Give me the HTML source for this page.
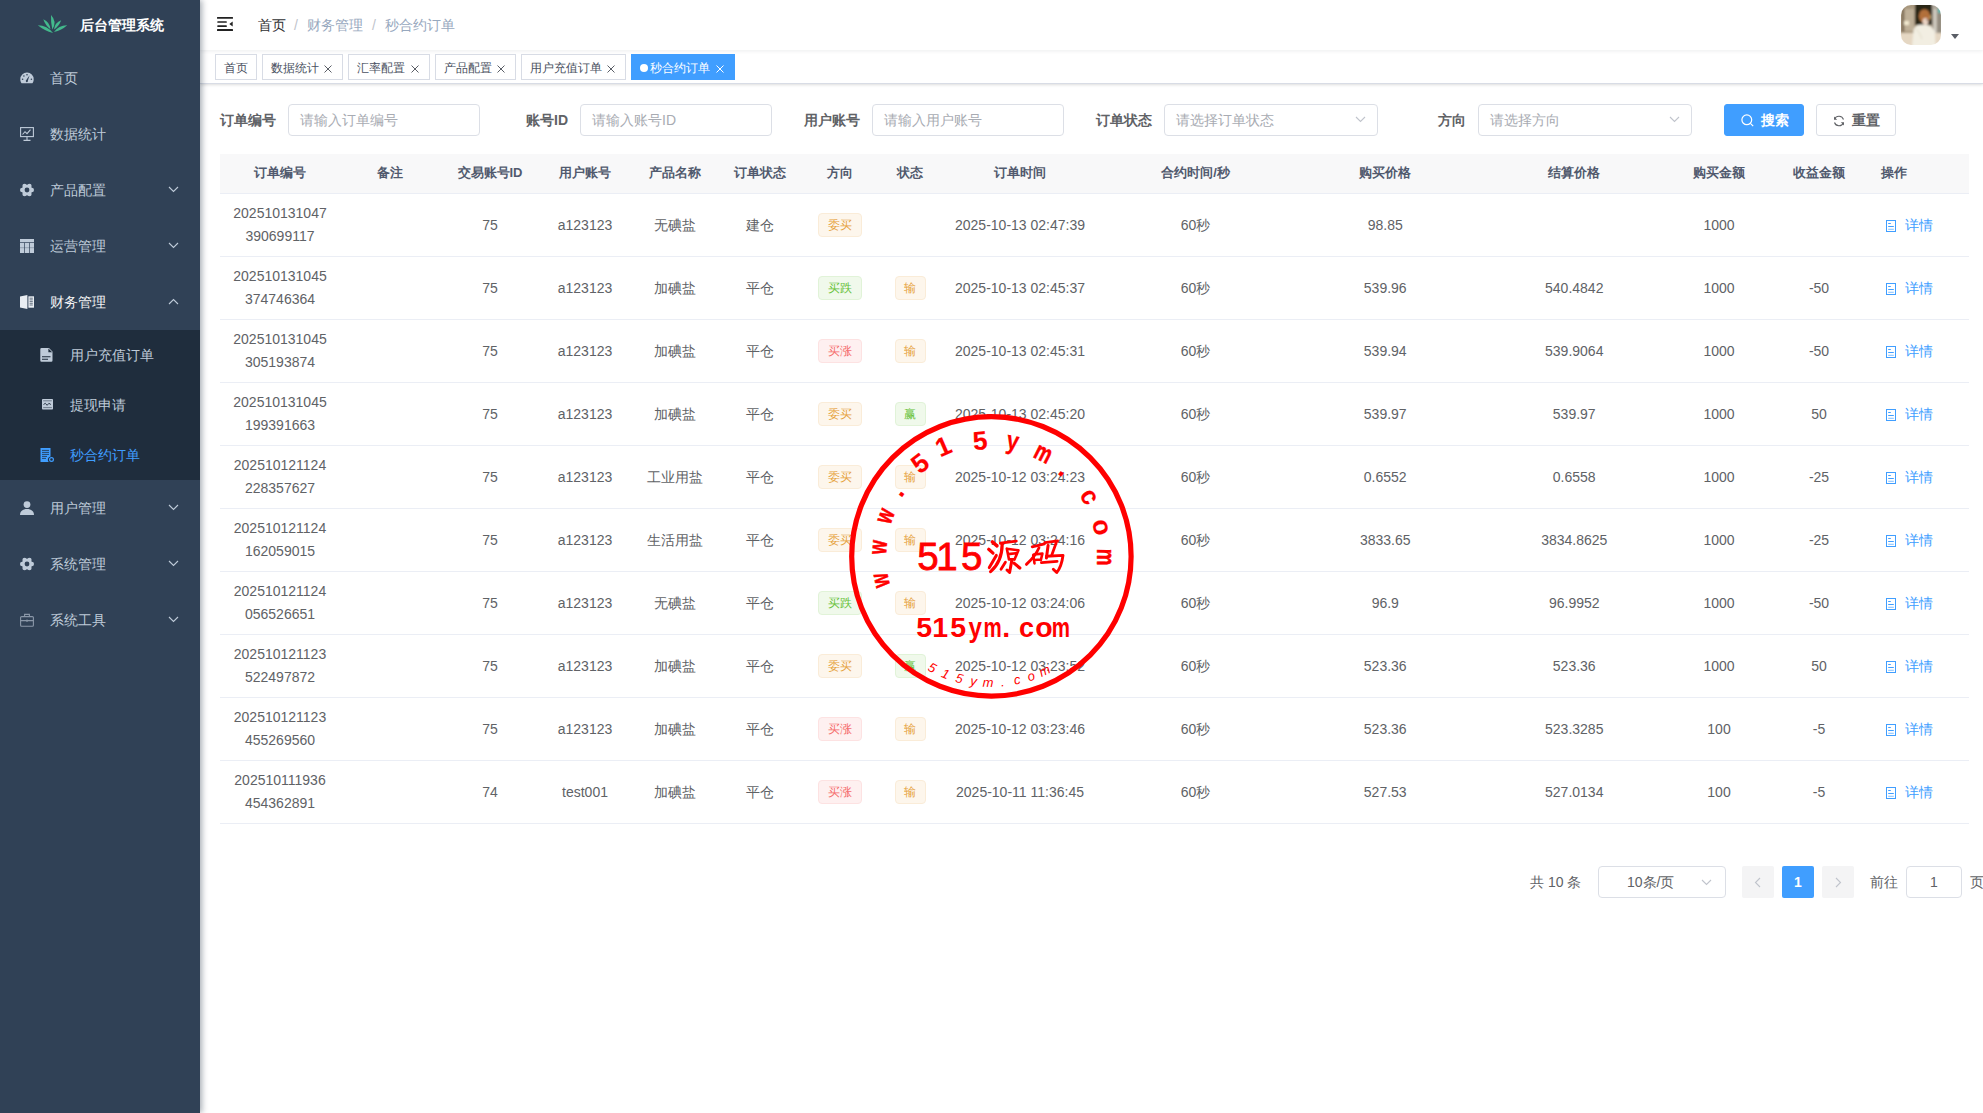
<!DOCTYPE html>
<html><head><meta charset="utf-8">
<style>
*{box-sizing:border-box;margin:0;padding:0}
html,body{width:1983px;height:1113px;overflow:hidden;background:#fff;font-family:"Liberation Sans",sans-serif;font-size:14px;color:#606266}
.abs{position:absolute}
#sb{position:absolute;left:0;top:0;width:200px;height:1113px;background:#304156;box-shadow:2px 0 6px rgba(0,21,41,.35);z-index:5}
.logo-t{position:absolute;left:80px;top:16px;font-size:14px;font-weight:bold;color:#fff;line-height:18px;white-space:nowrap}
.mi{position:absolute;left:0;width:200px;height:56px;color:#bfcbd9;font-size:14px}
.mi .tx{position:absolute;left:50px;top:0;line-height:56px;white-space:nowrap}
.mi svg.ic{position:absolute;left:20px;top:21px}
.mi svg.ch{position:absolute;left:168px;top:24px}
.sub{position:absolute;left:0;top:330px;width:200px;height:150px;background:#1f2d3d}
.si{position:absolute;left:0;width:200px;height:50px;color:#bfcbd9}
.si .tx{position:absolute;left:70px;top:0;line-height:50px;white-space:nowrap}
.si svg.ic{position:absolute;left:40px;top:18px}
#nav{position:absolute;z-index:3;left:200px;top:0;width:1783px;height:50px;background:#fff;box-shadow:0 1px 4px rgba(0,21,41,.08)}
.bc{position:absolute;top:16px;line-height:18px;font-size:14px;white-space:nowrap}
#tags{position:absolute;left:200px;top:50px;width:1783px;height:34px;background:#fff;border-bottom:1px solid #d8dce5;box-shadow:0 1px 3px 0 rgba(0,0,0,.12),0 0 3px 0 rgba(0,0,0,.04)}
.tag{position:absolute;top:4px;height:26px;border:1px solid #d8dce5;color:#495060;background:#fff;font-size:12px;line-height:24px;padding-left:8px;padding-top:1px;white-space:nowrap}
.tag svg.x{position:absolute;right:10px;top:9.5px}
.tag.act{background:#409eff;border-color:#409eff;color:#fff}
.lbl{position:absolute;top:104px;height:32px;line-height:32px;font-weight:bold;color:#606266;font-size:14px;white-space:nowrap}
.inp{position:absolute;top:104px;height:32px;border:1px solid #dcdfe6;border-radius:4px;background:#fff;color:#a8abb2;font-size:14px;line-height:30px;padding-left:11px;white-space:nowrap}
.btn{position:absolute;top:104px;height:32px;border-radius:3px;font-size:14px;line-height:30px;white-space:nowrap}
table{position:absolute;left:220px;top:154px;width:1749px;border-collapse:collapse;table-layout:fixed}
th{height:39px;background:#f8f8f9;color:#515a6e;font-size:13px;font-weight:bold;text-align:center;border-bottom:1px solid #ebeef5;padding:0;white-space:nowrap}
td{height:63px;text-align:center;border-bottom:1px solid #ebeef5;padding:2px 0 0 0;font-size:14px;color:#606266;line-height:23px;white-space:nowrap}
.tg{display:inline-block;height:24px;line-height:22px;font-size:12px;border:1px solid;border-radius:4px;vertical-align:middle;text-align:center}
.tg2{width:44px}.tg1{width:31px}
.w{background:#fdf6ec;border-color:#faecd8;color:#e6a23c}
.s{background:#f0f9eb;border-color:#e1f3d8;color:#67c23a}
.d{background:#fef0f0;border-color:#fde2e2;color:#f56c6c}
.lk{color:#409eff;font-size:14px}
.pg{position:absolute;white-space:nowrap}

td:first-child{padding-top:0}
.tg{position:relative;top:-1px}

</style></head><body>
<div id="sb">
  <svg class="abs" style="left:34px;top:10px" width="38" height="28" viewBox="0 0 38 28"><g fill="#43b98c"><path d="M18.3 19.5Q23.4 11.7 17.0 5.0Q16.7 12.3 18.3 19.5Z"/><path d="M16.4 19.2Q15.9 12.1 9.3 9.2Q11.3 15.3 16.4 19.2Z"/><path d="M20.0 19.5Q25.1 16.0 27.2 10.2Q20.7 12.6 20.0 19.5Z"/><path d="M19.0 23.0Q13.2 15.6 3.8 15.3Q10.5 20.9 19.0 23.0Z"/><path d="M20.0 22.0Q27.5 20.4 33.2 15.2Q24.8 15.0 20.0 22.0Z"/></g></svg>
  <div class="logo-t">后台管理系统</div>
<div class="mi" style="top:50px;"><svg class="ic" width="14" height="12" viewBox="0 0 14 12" style="top:22px"><path fill="#bfcbd9" d="M7 0.5A6.6 6.6 0 0 0 0.3 7.2c0 1.6.5 3 1.3 4.1h10.8c.8-1.1 1.3-2.5 1.3-4.1A6.6 6.6 0 0 0 7 .5z"/><g fill="#304156"><circle cx="2.6" cy="7.2" r=".8"/><circle cx="3.9" cy="4" r=".8"/><circle cx="7" cy="2.7" r=".8"/><circle cx="11.4" cy="7.2" r=".8"/><path d="M9.6 3.2 L7.9 8.6 A1.1 1.1 0 1 1 6.3 8.1Z"/></g></svg><span class="tx">首页</span></div>
<div class="mi" style="top:106px;"><svg class="ic" width="14" height="14" viewBox="0 0 14 14"><g fill="none" stroke="#bfcbd9" stroke-width="1.1"><rect x=".6" y=".6" width="12.8" height="9"/><path d="M7 9.6V13M3.5 13.4h7"/><path d="M2.5 7.5l2.5-2.8 2 2 3.5-4"/></g></svg><span class="tx">数据统计</span></div>
<div class="mi" style="top:162px;"><svg class="ic" width="14" height="14" viewBox="0 0 14 14"><g fill="#bfcbd9"><circle cx="7" cy="7" r="5.2"/><circle cx="11.75" cy="7.00" r="2.25"/><circle cx="9.38" cy="11.11" r="2.25"/><circle cx="4.63" cy="11.11" r="2.25"/><circle cx="2.25" cy="7.00" r="2.25"/><circle cx="4.62" cy="2.89" r="2.25"/><circle cx="9.38" cy="2.89" r="2.25"/></g><circle cx="7" cy="7" r="2.4" fill="#304156"/></svg><span class="tx">产品配置</span><svg class="ch" width="11" height="7" viewBox="0 0 11 7"><path d="M1 1l4.5 4.5L10 1" fill="none" stroke="#bfcbd9" stroke-width="1.1"/></svg></div>
<div class="mi" style="top:218px;"><svg class="ic" width="14" height="14" viewBox="0 0 14 14"><rect x="0" y="0" width="14" height="14" fill="#bfcbd9"/><g fill="#304156"><rect x="0" y="3" width="14" height=".7"/><rect x="4.3" y="3.7" width=".7" height="10.3"/><rect x="9" y="3.7" width=".7" height="10.3"/><rect x="0" y="8.6" width="14" height=".5" opacity=".6"/></g></svg><span class="tx">运营管理</span><svg class="ch" width="11" height="7" viewBox="0 0 11 7"><path d="M1 1l4.5 4.5L10 1" fill="none" stroke="#bfcbd9" stroke-width="1.1"/></svg></div>
<div class="mi" style="top:274px;color:#f4f4f5"><svg class="ic" width="14" height="14" viewBox="0 0 14 14"><g fill="#e9edf2"><path d="M0 1.6 L7.4 0 V14 L0 12.6Z"/><rect x="8.4" y="1.3" width="5.6" height="11.4"/></g><g stroke="#304156" stroke-width=".7"><path d="M9.6 3.2h3.2M9.6 4.9h3.2M9.6 6.6h3.2M9.6 8.3h3.2M9.6 10h3.2"/></g></svg><span class="tx">财务管理</span><svg class="ch" width="11" height="7" viewBox="0 0 11 7"><path d="M1 6l4.5-4.5L10 6" fill="none" stroke="#bfcbd9" stroke-width="1.1"/></svg></div>
<div class="mi" style="top:480px;"><svg class="ic" width="14" height="14" viewBox="0 0 14 14"><g fill="#bfcbd9"><circle cx="7" cy="3.6" r="3.4"/><path d="M0 14c0-3.6 2.6-6 7-6s7 2.4 7 6z"/></g></svg><span class="tx">用户管理</span><svg class="ch" width="11" height="7" viewBox="0 0 11 7"><path d="M1 1l4.5 4.5L10 1" fill="none" stroke="#bfcbd9" stroke-width="1.1"/></svg></div>
<div class="mi" style="top:536px;"><svg class="ic" width="14" height="14" viewBox="0 0 14 14"><g fill="#bfcbd9"><circle cx="7" cy="7" r="5.2"/><circle cx="11.75" cy="7.00" r="2.25"/><circle cx="9.38" cy="11.11" r="2.25"/><circle cx="4.63" cy="11.11" r="2.25"/><circle cx="2.25" cy="7.00" r="2.25"/><circle cx="4.62" cy="2.89" r="2.25"/><circle cx="9.38" cy="2.89" r="2.25"/></g><circle cx="7" cy="7" r="2.4" fill="#304156"/></svg><span class="tx">系统管理</span><svg class="ch" width="11" height="7" viewBox="0 0 11 7"><path d="M1 1l4.5 4.5L10 1" fill="none" stroke="#bfcbd9" stroke-width="1.1"/></svg></div>
<div class="mi" style="top:592px;"><svg class="ic" width="14" height="14" viewBox="0 0 14 14"><g fill="none" stroke="#8a97a8" stroke-width="1.1"><rect x=".6" y="3.6" width="12.8" height="9.6" rx="1"/><path d="M4.6 3.6V1.4h4.8v2.2M.6 7.6h12.8M7 6.4v2.6M5.7 7.7h2.6"/></g></svg><span class="tx">系统工具</span><svg class="ch" width="11" height="7" viewBox="0 0 11 7"><path d="M1 1l4.5 4.5L10 1" fill="none" stroke="#bfcbd9" stroke-width="1.1"/></svg></div>
<div class="sub">
<div class="si" style="top:0px;"><svg class="ic" width="14" height="14" viewBox="0 0 14 14"><path fill="#bfcbd9" d="M1.5 0H9l3.5 3.5V12.5a1.2 1.2 0 0 1-1.2 1.2H1.5a1.2 1.2 0 0 1-1.2-1.2V1.2A1.2 1.2 0 0 1 1.5 0z"/><path fill="#1f2d3d" d="M8.4 .5V4.3h3.8z"/><g stroke="#1f2d3d" stroke-width="1.1"><path d="M2 8.8h8.5M2 11.2h6"/></g></svg><span class="tx">用户充值订单</span></div>
<div class="si" style="top:50px;"><svg class="ic" width="11" height="11" viewBox="0 0 11 11" style="left:42px;top:19px"><rect x="0" y="0" width="11" height="10.5" rx=".8" fill="#bfcbd9"/><g stroke="#1f2d3d" fill="none"><path d="M1.2 1.8h8.6M1.2 8.6h8.6" stroke-width=".7" stroke-opacity=".7"/><path d="M1.5 5.5l1.8-1.2 1.8 2 1.8-2 2 1.2" stroke-width=".9"/></g></svg><span class="tx">提现申请</span></div>
<div class="si" style="top:100px;color:#409eff"><svg class="ic" width="14" height="14" viewBox="0 0 14 14"><path fill="#409eff" d="M.5 0h10v8.4a3.4 3.4 0 0 0-1.8 5.6H.5z"/><g stroke="#1f2d3d" stroke-width=".8"><path d="M2 2.4h7M2 4.4h7M2 6.4h7M2 8.4h5M2 10.4h4"/></g><circle cx="11.5" cy="11.5" r="1.9" fill="none" stroke="#409eff" stroke-width="1.2"/></svg><span class="tx">秒合约订单</span></div>
</div>
</div>
<div id="nav"><svg class="abs" style="left:17px;top:17px" width="16" height="14" viewBox="0 0 16 14"><g fill="#222"><rect x="0" y="0" width="16" height="1.8" rx=".5"/><rect x=".3" y="4.2" width="9.5" height="1.6" rx=".5"/><rect x=".3" y="8.2" width="9.5" height="1.7" rx=".5"/><rect x="0" y="12.1" width="16" height="1.8" rx=".5"/><path d="M15.7 4.6v4.8L12.3 7z"/></g></svg><span class="bc" style="left:58px;color:#303133">首页</span><span class="bc" style="left:94px;color:#c0c4cc">/</span><span class="bc" style="left:107px;color:#97a8be">财务管理</span><span class="bc" style="left:172px;color:#c0c4cc">/</span><span class="bc" style="left:185px;color:#97a8be">秒合约订单</span><svg class="abs" style="left:1701px;top:5px" width="40" height="40" viewBox="0 0 40 40"><defs><clipPath id="avc"><rect width="40" height="40" rx="10"/></clipPath><filter id="avb" x="-10%" y="-10%" width="120%" height="120%"><feGaussianBlur stdDeviation="0.85"/></filter></defs><g clip-path="url(#avc)"><g filter="url(#avb)"><rect x="-2" y="-2" width="44" height="44" fill="#b3a48e"/><rect x="-2" y="-2" width="17" height="31" fill="#a8977e"/><rect x="4" y="4" width="9" height="22" fill="#bfb098"/><rect x="1" y="3" width="1.6" height="24" fill="#6b5a44"/><rect x="3" y="16" width="5" height="4" fill="#f3ead0"/><rect x="14" y="-2" width="17" height="22" fill="#2c2519"/><rect x="28" y="10" width="2" height="4" fill="#b9a56a"/><rect x="31" y="-2" width="11" height="32" fill="#aaa396"/><rect x="33" y="4" width="2" height="26" fill="#d9d5cb"/><rect x="37" y="5" width="3" height="24" fill="#8d877a"/><rect x="37" y="3" width="3" height="5" fill="#4fb8b0"/><rect x="-2" y="28" width="44" height="14" fill="#e5d7c3"/><ellipse cx="23.5" cy="11" rx="5.6" ry="6.8" fill="#b26f3a"/><ellipse cx="24.5" cy="16.5" rx="3" ry="3.6" fill="#edd6c6"/><circle cx="26" cy="15" r=".7" fill="#3a2a20"/><path d="M11 42 L12.5 25 Q14 20 20 19.5 L26 20 Q33 21.5 34 29 L34.5 42Z" fill="#f2eee2"/><path d="M15 24 Q19 27 21 34" stroke="#e2dccb" stroke-width="1" fill="none"/></g></g></svg><svg class="abs" style="left:1751px;top:34px" width="8" height="5" viewBox="0 0 8 5"><path d="M0 0h8L4 5z" fill="#5a5e66"/></svg></div>
<div id="tags"><div class="tag" style="left:15px;width:42px">首页</div>
<div class="tag" style="left:62px;width:81px">数据统计<svg class="x" width="8" height="8" viewBox="0 0 8 8"><path d="M.5.5l7 7M7.5.5l-7 7" stroke="#5a5e66" stroke-width="1"/></svg></div>
<div class="tag" style="left:148px;width:82px">汇率配置<svg class="x" width="8" height="8" viewBox="0 0 8 8"><path d="M.5.5l7 7M7.5.5l-7 7" stroke="#5a5e66" stroke-width="1"/></svg></div>
<div class="tag" style="left:235px;width:81px">产品配置<svg class="x" width="8" height="8" viewBox="0 0 8 8"><path d="M.5.5l7 7M7.5.5l-7 7" stroke="#5a5e66" stroke-width="1"/></svg></div>
<div class="tag" style="left:321px;width:105px">用户充值订单<svg class="x" width="8" height="8" viewBox="0 0 8 8"><path d="M.5.5l7 7M7.5.5l-7 7" stroke="#5a5e66" stroke-width="1"/></svg></div>
<div class="tag act" style="left:431px;width:104px"><span style="display:inline-block;width:8px;height:8px;border-radius:50%;background:#fff;margin-right:2px;vertical-align:0px"></span>秒合约订单<svg class="x" width="8" height="8" viewBox="0 0 8 8"><path d="M.5.5l7 7M7.5.5l-7 7" stroke="#fff" stroke-width="1"/></svg></div></div>
<div class="lbl" style="left:220px">订单编号</div><div class="inp" style="left:288px;width:192px">请输入订单编号</div>
<div class="lbl" style="left:526px">账号ID</div><div class="inp" style="left:580px;width:192px">请输入账号ID</div>
<div class="lbl" style="left:804px">用户账号</div><div class="inp" style="left:872px;width:192px">请输入用户账号</div>
<div class="lbl" style="left:1096px">订单状态</div><div class="inp" style="left:1164px;width:214px">请选择订单状态</div><svg class="abs" style="left:1355px;top:116px" width="11" height="7" viewBox="0 0 11 7"><path d="M1 1l4.5 4.5L10 1" fill="none" stroke="#c0c4cc" stroke-width="1.1"/></svg>
<div class="lbl" style="left:1438px">方向</div><div class="inp" style="left:1478px;width:214px">请选择方向</div><svg class="abs" style="left:1669px;top:116px" width="11" height="7" viewBox="0 0 11 7"><path d="M1 1l4.5 4.5L10 1" fill="none" stroke="#c0c4cc" stroke-width="1.1"/></svg>
<div class="btn" style="left:1724px;width:80px;background:#409eff;border:1px solid #409eff;color:#fff;font-weight:bold"><svg class="abs" style="left:16px;top:9px" width="13" height="13" viewBox="0 0 13 13"><circle cx="5.8" cy="5.8" r="4.9" fill="none" stroke="#fff" stroke-width="1.2"/><path d="M9.4 9.4l2.8 2.8" stroke="#fff" stroke-width="1.2"/></svg><span class="abs" style="left:36px;top:0">搜索</span></div>
<div class="btn" style="left:1816px;width:80px;background:#fff;border:1px solid #dcdfe6;color:#606266;font-weight:bold"><svg class="abs" style="left:16px;top:10px" width="12" height="12" viewBox="0 0 12 12"><g fill="none" stroke="#606266" stroke-width="1.1"><path d="M10.5 4.5A4.8 4.8 0 0 0 1.6 4"/><path d="M1.5 7.5A4.8 4.8 0 0 0 10.4 8"/></g><path d="M1 1.5v3.2h3.2z" fill="#606266"/><path d="M11 10.5V7.3H7.8z" fill="#606266"/></svg><span class="abs" style="left:35px;top:0">重置</span></div>
<table><colgroup><col style="width:120px"><col style="width:100px"><col style="width:100px"><col style="width:90px"><col style="width:90px"><col style="width:80px"><col style="width:80px"><col style="width:60px"><col style="width:160px"><col style="width:191px"><col style="width:188.5px"><col style="width:189.5px"><col style="width:100px"><col style="width:100px"><col style="width:50px"><col style="width:50px"></colgroup>
<tr><th>订单编号</th><th>备注</th><th>交易账号ID</th><th>用户账号</th><th>产品名称</th><th>订单状态</th><th>方向</th><th>状态</th><th>订单时间</th><th>合约时间/秒</th><th>购买价格</th><th>结算价格</th><th>购买金额</th><th>收益金额</th><th>操作</th><th></th></tr>
<tr><td>202510131047<br>390699117</td><td></td><td>75</td><td>a123123</td><td>无碘盐</td><td>建仓</td><td><span class="tg tg2 w">委买</span></td><td></td><td>2025-10-13 02:47:39</td><td>60秒</td><td>98.85</td><td></td><td>1000</td><td></td><td colspan="2" style="text-align:left;padding-left:17px"><span class="lk"><svg width="10" height="12" viewBox="0 0 10 12" style="vertical-align:-2px;margin-right:9px"><g fill="none" stroke="#409eff" stroke-width="1"><rect x=".5" y=".5" width="9" height="11"/><path d="M2.2 3.5h2.6M2.2 6.5h5.6"/><path d="M2.2 9.3h5.6" stroke-opacity=".6" stroke-width="1.1"/></g></svg>详情</span></td></tr>
<tr><td>202510131045<br>374746364</td><td></td><td>75</td><td>a123123</td><td>加碘盐</td><td>平仓</td><td><span class="tg tg2 s">买跌</span></td><td><span class="tg tg1 w">输</span></td><td>2025-10-13 02:45:37</td><td>60秒</td><td>539.96</td><td>540.4842</td><td>1000</td><td>-50</td><td colspan="2" style="text-align:left;padding-left:17px"><span class="lk"><svg width="10" height="12" viewBox="0 0 10 12" style="vertical-align:-2px;margin-right:9px"><g fill="none" stroke="#409eff" stroke-width="1"><rect x=".5" y=".5" width="9" height="11"/><path d="M2.2 3.5h2.6M2.2 6.5h5.6"/><path d="M2.2 9.3h5.6" stroke-opacity=".6" stroke-width="1.1"/></g></svg>详情</span></td></tr>
<tr><td>202510131045<br>305193874</td><td></td><td>75</td><td>a123123</td><td>加碘盐</td><td>平仓</td><td><span class="tg tg2 d">买涨</span></td><td><span class="tg tg1 w">输</span></td><td>2025-10-13 02:45:31</td><td>60秒</td><td>539.94</td><td>539.9064</td><td>1000</td><td>-50</td><td colspan="2" style="text-align:left;padding-left:17px"><span class="lk"><svg width="10" height="12" viewBox="0 0 10 12" style="vertical-align:-2px;margin-right:9px"><g fill="none" stroke="#409eff" stroke-width="1"><rect x=".5" y=".5" width="9" height="11"/><path d="M2.2 3.5h2.6M2.2 6.5h5.6"/><path d="M2.2 9.3h5.6" stroke-opacity=".6" stroke-width="1.1"/></g></svg>详情</span></td></tr>
<tr><td>202510131045<br>199391663</td><td></td><td>75</td><td>a123123</td><td>加碘盐</td><td>平仓</td><td><span class="tg tg2 w">委买</span></td><td><span class="tg tg1 s">赢</span></td><td>2025-10-13 02:45:20</td><td>60秒</td><td>539.97</td><td>539.97</td><td>1000</td><td>50</td><td colspan="2" style="text-align:left;padding-left:17px"><span class="lk"><svg width="10" height="12" viewBox="0 0 10 12" style="vertical-align:-2px;margin-right:9px"><g fill="none" stroke="#409eff" stroke-width="1"><rect x=".5" y=".5" width="9" height="11"/><path d="M2.2 3.5h2.6M2.2 6.5h5.6"/><path d="M2.2 9.3h5.6" stroke-opacity=".6" stroke-width="1.1"/></g></svg>详情</span></td></tr>
<tr><td>202510121124<br>228357627</td><td></td><td>75</td><td>a123123</td><td>工业用盐</td><td>平仓</td><td><span class="tg tg2 w">委买</span></td><td><span class="tg tg1 w">输</span></td><td>2025-10-12 03:24:23</td><td>60秒</td><td>0.6552</td><td>0.6558</td><td>1000</td><td>-25</td><td colspan="2" style="text-align:left;padding-left:17px"><span class="lk"><svg width="10" height="12" viewBox="0 0 10 12" style="vertical-align:-2px;margin-right:9px"><g fill="none" stroke="#409eff" stroke-width="1"><rect x=".5" y=".5" width="9" height="11"/><path d="M2.2 3.5h2.6M2.2 6.5h5.6"/><path d="M2.2 9.3h5.6" stroke-opacity=".6" stroke-width="1.1"/></g></svg>详情</span></td></tr>
<tr><td>202510121124<br>162059015</td><td></td><td>75</td><td>a123123</td><td>生活用盐</td><td>平仓</td><td><span class="tg tg2 w">委买</span></td><td><span class="tg tg1 w">输</span></td><td>2025-10-12 03:24:16</td><td>60秒</td><td>3833.65</td><td>3834.8625</td><td>1000</td><td>-25</td><td colspan="2" style="text-align:left;padding-left:17px"><span class="lk"><svg width="10" height="12" viewBox="0 0 10 12" style="vertical-align:-2px;margin-right:9px"><g fill="none" stroke="#409eff" stroke-width="1"><rect x=".5" y=".5" width="9" height="11"/><path d="M2.2 3.5h2.6M2.2 6.5h5.6"/><path d="M2.2 9.3h5.6" stroke-opacity=".6" stroke-width="1.1"/></g></svg>详情</span></td></tr>
<tr><td>202510121124<br>056526651</td><td></td><td>75</td><td>a123123</td><td>无碘盐</td><td>平仓</td><td><span class="tg tg2 s">买跌</span></td><td><span class="tg tg1 w">输</span></td><td>2025-10-12 03:24:06</td><td>60秒</td><td>96.9</td><td>96.9952</td><td>1000</td><td>-50</td><td colspan="2" style="text-align:left;padding-left:17px"><span class="lk"><svg width="10" height="12" viewBox="0 0 10 12" style="vertical-align:-2px;margin-right:9px"><g fill="none" stroke="#409eff" stroke-width="1"><rect x=".5" y=".5" width="9" height="11"/><path d="M2.2 3.5h2.6M2.2 6.5h5.6"/><path d="M2.2 9.3h5.6" stroke-opacity=".6" stroke-width="1.1"/></g></svg>详情</span></td></tr>
<tr><td>202510121123<br>522497872</td><td></td><td>75</td><td>a123123</td><td>加碘盐</td><td>平仓</td><td><span class="tg tg2 w">委买</span></td><td><span class="tg tg1 s">赢</span></td><td>2025-10-12 03:23:52</td><td>60秒</td><td>523.36</td><td>523.36</td><td>1000</td><td>50</td><td colspan="2" style="text-align:left;padding-left:17px"><span class="lk"><svg width="10" height="12" viewBox="0 0 10 12" style="vertical-align:-2px;margin-right:9px"><g fill="none" stroke="#409eff" stroke-width="1"><rect x=".5" y=".5" width="9" height="11"/><path d="M2.2 3.5h2.6M2.2 6.5h5.6"/><path d="M2.2 9.3h5.6" stroke-opacity=".6" stroke-width="1.1"/></g></svg>详情</span></td></tr>
<tr><td>202510121123<br>455269560</td><td></td><td>75</td><td>a123123</td><td>加碘盐</td><td>平仓</td><td><span class="tg tg2 d">买涨</span></td><td><span class="tg tg1 w">输</span></td><td>2025-10-12 03:23:46</td><td>60秒</td><td>523.36</td><td>523.3285</td><td>100</td><td>-5</td><td colspan="2" style="text-align:left;padding-left:17px"><span class="lk"><svg width="10" height="12" viewBox="0 0 10 12" style="vertical-align:-2px;margin-right:9px"><g fill="none" stroke="#409eff" stroke-width="1"><rect x=".5" y=".5" width="9" height="11"/><path d="M2.2 3.5h2.6M2.2 6.5h5.6"/><path d="M2.2 9.3h5.6" stroke-opacity=".6" stroke-width="1.1"/></g></svg>详情</span></td></tr>
<tr><td>202510111936<br>454362891</td><td></td><td>74</td><td>test001</td><td>加碘盐</td><td>平仓</td><td><span class="tg tg2 d">买涨</span></td><td><span class="tg tg1 w">输</span></td><td>2025-10-11 11:36:45</td><td>60秒</td><td>527.53</td><td>527.0134</td><td>100</td><td>-5</td><td colspan="2" style="text-align:left;padding-left:17px"><span class="lk"><svg width="10" height="12" viewBox="0 0 10 12" style="vertical-align:-2px;margin-right:9px"><g fill="none" stroke="#409eff" stroke-width="1"><rect x=".5" y=".5" width="9" height="11"/><path d="M2.2 3.5h2.6M2.2 6.5h5.6"/><path d="M2.2 9.3h5.6" stroke-opacity=".6" stroke-width="1.1"/></g></svg>详情</span></td></tr>
</table>
<span class="pg" style="left:1530px;top:873px;line-height:18px;color:#606266">共 10 条</span><div class="inp" style="left:1598px;top:866px;width:128px;color:#606266;padding-left:28px">10条/页</div><svg class="abs" style="left:1701px;top:879px" width="11" height="7" viewBox="0 0 11 7"><path d="M1 1l4.5 4.5L10 1" fill="none" stroke="#c0c4cc" stroke-width="1.1"/></svg><div class="abs" style="left:1742px;top:866px;width:32px;height:32px;background:#f4f4f5;border-radius:2px"><svg class="abs" style="left:12px;top:11px" width="7" height="11" viewBox="0 0 7 11"><path d="M6 1L1.5 5.5 6 10" fill="none" stroke="#c0c4cc" stroke-width="1.1"/></svg></div><div class="abs" style="left:1782px;top:866px;width:32px;height:32px;background:#409eff;border-radius:2px;color:#fff;font-weight:bold;text-align:center;line-height:32px">1</div><div class="abs" style="left:1822px;top:866px;width:32px;height:32px;background:#f4f4f5;border-radius:2px"><svg class="abs" style="left:13px;top:11px" width="7" height="11" viewBox="0 0 7 11"><path d="M1 1l4.5 4.5L1 10" fill="none" stroke="#c0c4cc" stroke-width="1.1"/></svg></div><span class="pg" style="left:1870px;top:873px;line-height:18px;color:#606266">前往</span><div class="inp" style="left:1906px;top:866px;width:56px;color:#606266;padding-left:0;text-align:center">1</div><span class="pg" style="left:1970px;top:873px;line-height:18px;color:#606266">页</span>
<svg class="abs" style="left:0;top:0;z-index:10;pointer-events:none" width="1983" height="1113" viewBox="0 0 1983 1113">
<circle cx="991.4" cy="556.4" r="139.7" fill="none" stroke="#f00" stroke-width="5.2"/>
<text transform="translate(880.0,580.7) rotate(257.7) scale(0.68,1)" text-anchor="middle" dominant-baseline="central" font-size="26" font-weight="bold" fill="#f00" stroke="#f00" stroke-width="0.6">w</text>
<text transform="translate(877.8,547.3) rotate(274.6) scale(0.68,1)" text-anchor="middle" dominant-baseline="central" font-size="26" font-weight="bold" fill="#f00" stroke="#f00" stroke-width="0.6">w</text>
<text transform="translate(884.4,515.7) rotate(290.8) scale(0.68,1)" text-anchor="middle" dominant-baseline="central" font-size="26" font-weight="bold" fill="#f00" stroke="#f00" stroke-width="0.6">w</text>
<text transform="translate(895.9,490.5) rotate(304.6) scale(1,1)" text-anchor="middle" dominant-baseline="central" font-size="26" font-weight="bold" fill="#f00" stroke="#f00" stroke-width="0.2">.</text>
<text transform="translate(919.9,463.2) rotate(322.5) scale(1,1)" text-anchor="middle" dominant-baseline="central" font-size="26" font-weight="bold" fill="#f00" stroke="#f00" stroke-width="0.2">5</text>
<text transform="translate(943.4,446.4) rotate(336.4) scale(1,1)" text-anchor="middle" dominant-baseline="central" font-size="26" font-weight="bold" fill="#f00" stroke="#f00" stroke-width="0.2">1</text>
<text transform="translate(980.0,440.5) rotate(354.4) scale(1,1)" text-anchor="middle" dominant-baseline="central" font-size="26" font-weight="bold" fill="#f00" stroke="#f00" stroke-width="0.2">5</text>
<text transform="translate(1012.9,440.4) rotate(370.5) scale(0.85,1)" text-anchor="middle" dominant-baseline="central" font-size="26" font-weight="bold" fill="#f00" stroke="#f00" stroke-width="0.2">y</text>
<text transform="translate(1043.7,452.3) rotate(386.7) scale(0.72,1)" text-anchor="middle" dominant-baseline="central" font-size="26" font-weight="bold" fill="#f00" stroke="#f00" stroke-width="0.6">m</text>
<text transform="translate(1065.5,468.4) rotate(400.1) scale(1,1)" text-anchor="middle" dominant-baseline="central" font-size="26" font-weight="bold" fill="#f00" stroke="#f00" stroke-width="0.2">.</text>
<text transform="translate(1090.5,496.1) rotate(418.7) scale(0.95,1)" text-anchor="middle" dominant-baseline="central" font-size="26" font-weight="bold" fill="#f00" stroke="#f00" stroke-width="0.2">c</text>
<text transform="translate(1102.5,526.8) rotate(435.1) scale(1,1)" text-anchor="middle" dominant-baseline="central" font-size="26" font-weight="bold" fill="#f00" stroke="#f00" stroke-width="0.2">o</text>
<text transform="translate(1106.4,557.0) rotate(450.3) scale(0.72,1)" text-anchor="middle" dominant-baseline="central" font-size="26" font-weight="bold" fill="#f00" stroke="#f00" stroke-width="0.6">m</text>
<text transform="translate(932.4,667.8) rotate(27.9)" text-anchor="middle" dominant-baseline="central" font-size="13" font-style="italic" fill="#f00">5</text>
<text transform="translate(945.6,673.8) rotate(21.3)" text-anchor="middle" dominant-baseline="central" font-size="13" font-style="italic" fill="#f00">1</text>
<text transform="translate(959.4,678.3) rotate(14.7)" text-anchor="middle" dominant-baseline="central" font-size="13" font-style="italic" fill="#f00">5</text>
<text transform="translate(973.6,681.1) rotate(8.1)" text-anchor="middle" dominant-baseline="central" font-size="13" font-style="italic" fill="#f00">y</text>
<text transform="translate(988.1,682.4) rotate(1.5)" text-anchor="middle" dominant-baseline="central" font-size="13" font-style="italic" fill="#f00">m</text>
<text transform="translate(1002.6,681.9) rotate(-5.1)" text-anchor="middle" dominant-baseline="central" font-size="13" font-style="italic" fill="#f00">.</text>
<text transform="translate(1017.0,679.8) rotate(-11.7)" text-anchor="middle" dominant-baseline="central" font-size="13" font-style="italic" fill="#f00">c</text>
<text transform="translate(1031.0,676.0) rotate(-18.3)" text-anchor="middle" dominant-baseline="central" font-size="13" font-style="italic" fill="#f00">o</text>
<text transform="translate(1044.5,670.7) rotate(-24.9)" text-anchor="middle" dominant-baseline="central" font-size="13" font-style="italic" fill="#f00">m</text>
<text x="928" y="569.6" text-anchor="middle" font-size="38.5" fill="#f00" stroke="#f00" stroke-width="0.8">5</text>
<text x="947" y="569.6" text-anchor="middle" font-size="38.5" fill="#f00" stroke="#f00" stroke-width="0.8">1</text>
<text x="971.8" y="569.6" text-anchor="middle" font-size="38.5" fill="#f00" stroke="#f00" stroke-width="0.8">5</text>
<g fill="none" stroke="#f00" stroke-linecap="round" stroke-linejoin="round"><path d="M992.3 541.9L997 545.9" stroke-width="3.4"/><path d="M988.7 549.2L993 553.1" stroke-width="3.2"/><path d="M989.3 567.6L996.3 555.4" stroke-width="3"/><path d="M1000.4 543.2L1016.3 541.1" stroke-width="2.8"/><path d="M1002.2 544.1Q1002 562 990.6 571.6" stroke-width="3.2"/><path d="M1006.8 548.6L1009 559.5M1006.8 548.8L1018.4 550.3L1014.5 559.6M1008.1 554.1L1015.9 553.2M1009 559.4L1014.5 559.1" stroke-width="2.6"/><path d="M1011.8 560.4L1009.6 572.5L1007 570" stroke-width="3"/><path d="M1005.4 562.2L1001 569.3" stroke-width="2.8"/><path d="M1014 563.1L1019.8 568" stroke-width="3.2"/><path d="M1032.2 546.8L1044.5 543.9" stroke-width="2.8"/><path d="M1039 547.7Q1035.5 556 1026.4 564.4" stroke-width="2.8"/><path d="M1033.2 555L1034.5 563.4M1033.6 554.5L1042.4 553.6L1040.8 560.2M1034.5 560L1040.8 559.5" stroke-width="2.6"/><path d="M1044.9 542.7L1057.6 540.9M1056.7 541.4L1051.8 555" stroke-width="2.8"/><path d="M1048.1 545.4L1046.4 558" stroke-width="3"/><path d="M1046.4 556.3L1063 555.4Q1061.5 567 1056.7 572.5L1053.3 569.2" stroke-width="2.9"/><path d="M1041.4 562.7L1057.1 561.3" stroke-width="2.8"/></g>
<text transform="translate(924.25,636.6) scale(1,1)" text-anchor="middle" font-size="28.5" font-weight="bold" fill="#f00">5</text>
<text transform="translate(940.15,636.6) scale(1,1)" text-anchor="middle" font-size="28.5" font-weight="bold" fill="#f00">1</text>
<text transform="translate(958.25,636.6) scale(1,1)" text-anchor="middle" font-size="28.5" font-weight="bold" fill="#f00">5</text>
<text transform="translate(975.35,636.6) scale(0.85,1)" text-anchor="middle" font-size="28.5" font-weight="bold" fill="#f00">y</text>
<text transform="translate(992.6,636.6) scale(0.72,1)" text-anchor="middle" font-size="28.5" font-weight="bold" fill="#f00">m</text>
<text transform="translate(1006.3,636.6) scale(1,1)" text-anchor="middle" font-size="28.5" font-weight="bold" fill="#f00">.</text>
<text transform="translate(1026.45,636.6) scale(0.95,1)" text-anchor="middle" font-size="28.5" font-weight="bold" fill="#f00">c</text>
<text transform="translate(1043.95,636.6) scale(1,1)" text-anchor="middle" font-size="28.5" font-weight="bold" fill="#f00">o</text>
<text transform="translate(1060.8,636.6) scale(0.72,1)" text-anchor="middle" font-size="28.5" font-weight="bold" fill="#f00">m</text>
</svg>
</body></html>
